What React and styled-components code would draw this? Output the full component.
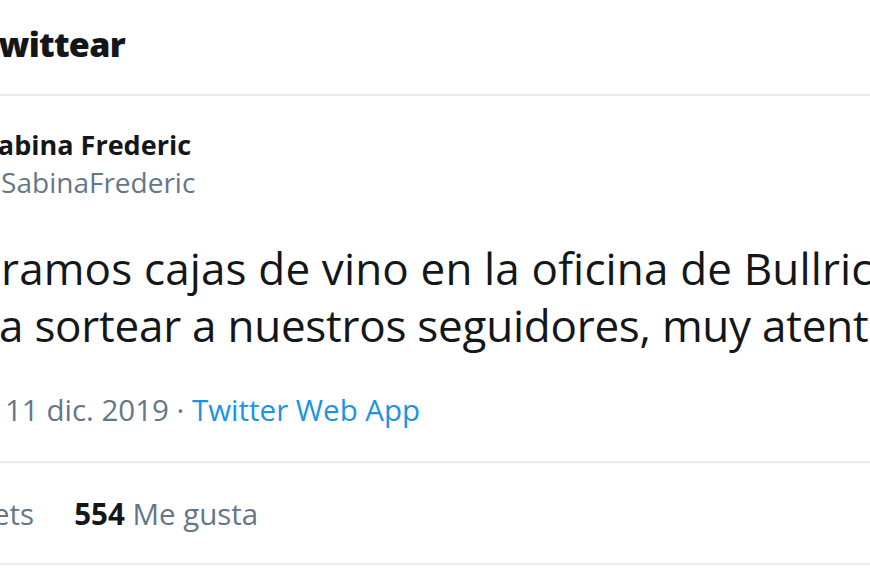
import React from 'react';
import styled, { createGlobalStyle } from 'styled-components';

const Global = createGlobalStyle`
    html, body {
        margin:0;
        padding:0;
        background:#fff;
        overflow:hidden;
    }
    body{
        font-family:"Open Sans", "Noto Sans", sans-serif;
        color:#14171a;
    }
`

const Page = styled.div`
    width:870px;
    height:580px;
    overflow:hidden;
    background:#fff;
`

const Header = styled.header`
    box-sizing:border-box;
    height:96px;
    padding-top:24px;
    border-bottom:2px solid #e9ecee;
    h1{
        margin:0 0 0 ${p => p.shift}px;
        font-size:34px;
        font-weight:800;
        letter-spacing:-0.7px;
        white-space:nowrap;
        line-height:40px;
    }
`

const Tweet = styled.article`
    padding-top:32px;
`

const Author = styled.div`
    display:flex;
    flex-direction:column;
    gap:1px;
`

const Line = styled.div`
    white-space:nowrap;
    margin-left:${p => p.shift || 0}px;
    font-size:${p => p.size}px;
    font-weight:${p => p.bold ? 700 : 400};
    color:${p => p.muted ? '#657786' : '#14171a'};
    letter-spacing:${p => p.spacing || 0}px;
    line-height:${p => p.lh}px;
`

const Body = styled.div`
    margin-top:39px;
`

const Meta = styled.div`
    margin-top:36px;
    padding-bottom:31px;
    border-bottom:2px solid #e9ecee;
    white-space:nowrap;
    font-size:29.5px;
    color:#657786;
    line-height:40px;
    padding-left:5px;
    a{
        color:#1b95e0;
        text-decoration:none;
    }
`

const Stats = styled.div`
    display:flex;
    align-items:center;
    gap:40px;
    padding:31px 0 29px;
    border-bottom:2px solid #e9ecee;
    font-size:29.5px;
    line-height:40px;
    color:#657786;
    white-space:nowrap;
    b{
        color:#14171a;
        font-weight:700;
    }
`

const Stat = styled.span`
    margin-left:${p => p.shift || 0}px;
`

export default function App(){
    return (
        <Page>
            <Global/>
            <Header shift={-21}>
                <h1>Twittear</h1>
            </Header>
            <Tweet>
                <Author>
                    <Line size={27} bold lh={34} shift={-17}>Sabina Frederic</Line>
                    <Line size={28} muted lh={38} shift={-24}>@SabinaFrederic</Line>
                </Author>
                <Body>
                    <Line size={44} lh={57} shift={1} spacing={0.15}>ramos cajas de vino en la oficina de Bullrich</Line>
                    <Line size={44} lh={57} shift={-1} spacing={-0.25}>a sortear a nuestros seguidores, muy atentos</Line>
                </Body>
                <Meta>
                    11 dic. 2019 · <a href="#">Twitter Web App</a>
                </Meta>
                <Stats>
                    <Stat shift={-7}>ets</Stat>
                    <Stat><b>554</b> Me gusta</Stat>
                </Stats>
            </Tweet>
        </Page>
    )
}
